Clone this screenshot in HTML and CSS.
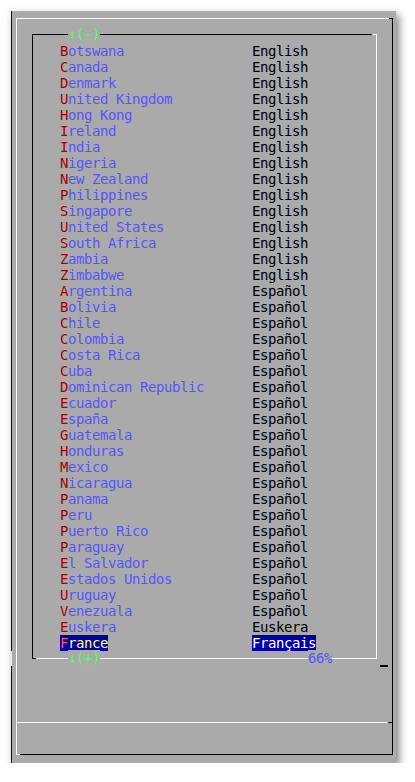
FILE: index.html
```html
<!DOCTYPE html>
<html>
<head>
<meta charset="utf-8">
<link rel="stylesheet" href="styles.css">
</head>
<body>
<div class="window">
  <span class="thumb"></span>
  <div class="dialog">
    <div class="list-area">
      <div class="listframe">
        <span class="label label-top">↑(-)</span>
        <ul class="list">
          <li class="row"><span class="name"><span class="hot">B</span>otswana</span><span class="lang">English</span></li>
          <li class="row"><span class="name"><span class="hot">C</span>anada</span><span class="lang">English</span></li>
          <li class="row"><span class="name"><span class="hot">D</span>enmark</span><span class="lang">English</span></li>
          <li class="row"><span class="name"><span class="hot">U</span>nited Kingdom</span><span class="lang">English</span></li>
          <li class="row"><span class="name"><span class="hot">H</span>ong Kong</span><span class="lang">English</span></li>
          <li class="row"><span class="name"><span class="hot">I</span>reland</span><span class="lang">English</span></li>
          <li class="row"><span class="name"><span class="hot">I</span>ndia</span><span class="lang">English</span></li>
          <li class="row"><span class="name"><span class="hot">N</span>igeria</span><span class="lang">English</span></li>
          <li class="row"><span class="name"><span class="hot">N</span>ew Zealand</span><span class="lang">English</span></li>
          <li class="row"><span class="name"><span class="hot">P</span>hilippines</span><span class="lang">English</span></li>
          <li class="row"><span class="name"><span class="hot">S</span>ingapore</span><span class="lang">English</span></li>
          <li class="row"><span class="name"><span class="hot">U</span>nited States</span><span class="lang">English</span></li>
          <li class="row"><span class="name"><span class="hot">S</span>outh Africa</span><span class="lang">English</span></li>
          <li class="row"><span class="name"><span class="hot">Z</span>ambia</span><span class="lang">English</span></li>
          <li class="row"><span class="name"><span class="hot">Z</span>imbabwe</span><span class="lang">English</span></li>
          <li class="row"><span class="name"><span class="hot">A</span>rgentina</span><span class="lang">Español</span></li>
          <li class="row"><span class="name"><span class="hot">B</span>olivia</span><span class="lang">Español</span></li>
          <li class="row"><span class="name"><span class="hot">C</span>hile</span><span class="lang">Español</span></li>
          <li class="row"><span class="name"><span class="hot">C</span>olombia</span><span class="lang">Español</span></li>
          <li class="row"><span class="name"><span class="hot">C</span>osta Rica</span><span class="lang">Español</span></li>
          <li class="row"><span class="name"><span class="hot">C</span>uba</span><span class="lang">Español</span></li>
          <li class="row"><span class="name"><span class="hot">D</span>ominican Republic</span><span class="lang">Español</span></li>
          <li class="row"><span class="name"><span class="hot">E</span>cuador</span><span class="lang">Español</span></li>
          <li class="row"><span class="name"><span class="hot">E</span>spaña</span><span class="lang">Español</span></li>
          <li class="row"><span class="name"><span class="hot">G</span>uatemala</span><span class="lang">Español</span></li>
          <li class="row"><span class="name"><span class="hot">H</span>onduras</span><span class="lang">Español</span></li>
          <li class="row"><span class="name"><span class="hot">M</span>exico</span><span class="lang">Español</span></li>
          <li class="row"><span class="name"><span class="hot">N</span>icaragua</span><span class="lang">Español</span></li>
          <li class="row"><span class="name"><span class="hot">P</span>anama</span><span class="lang">Español</span></li>
          <li class="row"><span class="name"><span class="hot">P</span>eru</span><span class="lang">Español</span></li>
          <li class="row"><span class="name"><span class="hot">P</span>uerto Rico</span><span class="lang">Español</span></li>
          <li class="row"><span class="name"><span class="hot">P</span>araguay</span><span class="lang">Español</span></li>
          <li class="row"><span class="name"><span class="hot">E</span>l Salvador</span><span class="lang">Español</span></li>
          <li class="row"><span class="name"><span class="hot">E</span>stados Unidos</span><span class="lang">Español</span></li>
          <li class="row"><span class="name"><span class="hot">U</span>ruguay</span><span class="lang">Español</span></li>
          <li class="row"><span class="name"><span class="hot">V</span>enezuala</span><span class="lang">Español</span></li>
          <li class="row"><span class="name"><span class="hot">E</span>uskera</span><span class="lang">Euskera</span></li>
          <li class="row selected"><span class="name"><span class="hot">F</span>rance</span><span class="lang">Français</span></li>
        </ul>
        <span class="label label-bottom">↓(+)</span>
        <span class="label label-pct">66%</span>
      </div>
      <span class="scroll-mark"></span>
    </div>
    <div class="separator"></div>
    <div class="buttons"></div>
  </div>
</div>
</body>
</html>
```

FILE: styles.css
```css
html, body {
  margin: 0;
  padding: 0;
  background: #ffffff;
}

body {
  font-family: "DejaVu Sans Mono", monospace;
  font-size: 14px;
  letter-spacing: -0.43px;
  line-height: 16px;
}

.window {
  position: relative;
  margin: 11px 0 0 11px;
  width: 385px;
  height: 752px;
  box-sizing: border-box;
  background: #aaaaaa;
  border-left: 1px solid #0000aa;
  padding: 7px 0 0 4px;
  box-shadow: 3px 4px 8px rgba(0, 0, 0, 0.5);
}

.thumb {
  position: absolute;
  left: -1px;
  top: 640px;
  width: 1px;
  height: 15px;
  background: #ffff66;
}

.dialog {
  position: relative;
  width: 377px;
  height: 737px;
  box-sizing: border-box;
  border: 1px solid;
  border-color: #ffffff #000000 #000000 #ffffff;
  display: flex;
  flex-direction: column;
}

.dialog::before {
  content: "";
  position: absolute;
  top: -1px;
  right: -1px;
  width: 4px;
  height: 1px;
  background: #000000;
}

.dialog::after {
  content: "";
  position: absolute;
  bottom: -1px;
  left: -1px;
  width: 4px;
  height: 1px;
  background: #ffffff;
}

.list-area {
  position: relative;
  flex: 1;
  padding: 15px 0 0 15px;
}

.listframe {
  position: relative;
  width: 345px;
  box-sizing: border-box;
  border: 1px solid;
  border-color: #000000 #ffffff #ffffff #000000;
  padding: 8px 0 7px 27px;
}

.listframe::before {
  content: "";
  position: absolute;
  top: -1px;
  right: -1px;
  width: 5px;
  height: 1px;
  background: #ffffff;
}

.listframe::after {
  content: "";
  position: absolute;
  bottom: -1px;
  left: -1px;
  width: 4px;
  height: 1px;
  background: #000000;
}

.list {
  list-style: none;
  margin: 0;
  padding: 0;
}

.row {
  display: grid;
  grid-template-columns: 192px auto;
  justify-items: start;
  height: 16px;
}

.name {
  color: #5555ff;
}

.hot {
  color: #aa0000;
}

.lang {
  color: #000000;
}

.selected .name,
.selected .lang {
  background: #0000aa;
}

.selected .name {
  color: #ffff55;
}

.selected .hot {
  color: #ff5555;
}

.selected .lang {
  color: #ffffff;
}

.label {
  position: absolute;
  background: #aaaaaa;
  line-height: 16px;
  color: #55ff55;
}

.label-top {
  top: -9px;
  left: 35px;
}

.label-bottom {
  bottom: -8px;
  left: 35px;
}

.label-pct {
  bottom: -8px;
  left: 275px;
  color: #5555ff;
}

.scroll-mark {
  position: absolute;
  left: 363px;
  top: 646px;
  width: 8px;
  height: 2px;
  background: #000000;
}

.separator {
  height: 1px;
  background: linear-gradient(to right, #ffffff calc(100% - 4px), #000000 0);
}

.buttons {
  height: 31px;
}
```
